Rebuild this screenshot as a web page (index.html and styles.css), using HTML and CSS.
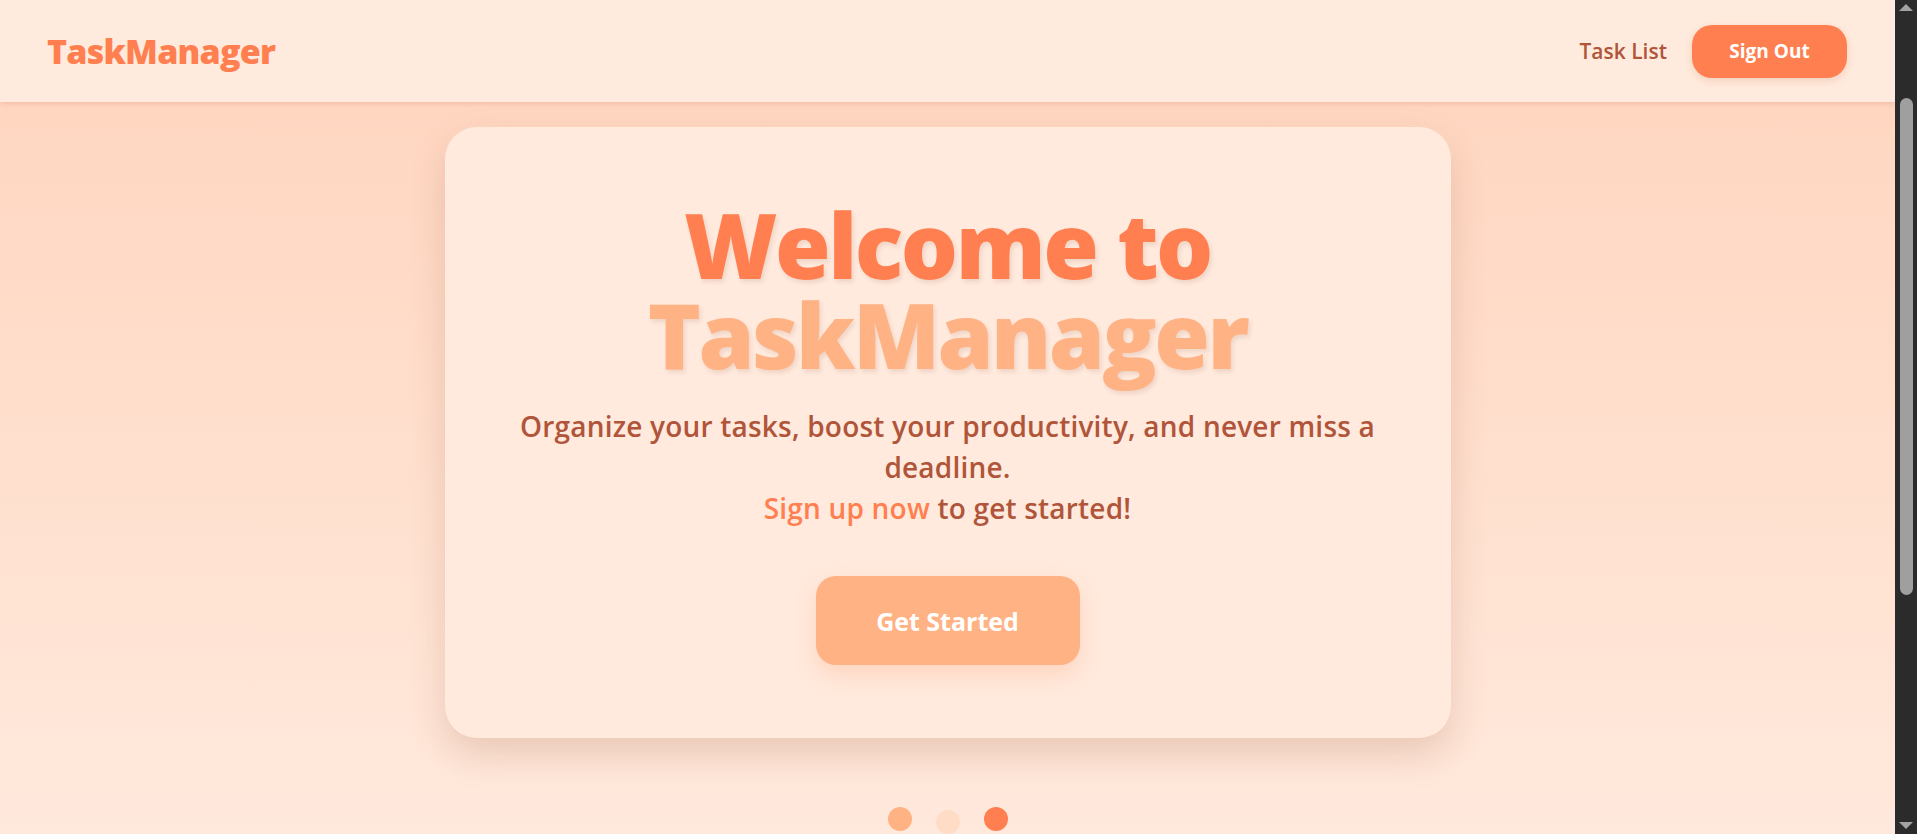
FILE: index.html
```html
<!DOCTYPE html>
<html lang="en">
<head>
<meta charset="utf-8">
<title>TaskManager</title>
<link rel="stylesheet" href="styles.css">
</head>
<body>
<header class="navbar">
  <a class="logo" href="#">TaskManager</a>
  <nav class="nav-links">
    <a class="nav-link" href="#">Task List</a>
    <button class="btn-signout">Sign Out</button>
  </nav>
</header>
<main class="hero">
  <section class="card">
    <h1 class="title"><span class="title-main">Welcome to</span><br><span class="title-accent">TaskManager</span></h1>
    <p class="subtitle">Organize your tasks, boost your productivity, and never miss a deadline.<br><a class="signup-link" href="#">Sign up now</a> to get started!</p>
    <button class="btn-start">Get Started</button>
  </section>
  <div class="dots">
    <span class="dot dot-peach"></span>
    <span class="dot dot-light"></span>
    <span class="dot dot-coral"></span>
  </div>
</main>
<div class="scrollbar" aria-hidden="true">
  <span class="sb-arrow sb-up"></span>
  <span class="sb-thumb"></span>
  <span class="sb-arrow sb-down"></span>
</div>
</body>
</html>
```
FILE: styles.css
```css
html {
  background: #ffe9dc;
}
body {
  margin: 0 22px 0 0;
  font-family: "Open Sans", "Noto Sans", sans-serif;
  background: linear-gradient(180deg, #ffd4bd 0px, #ffe9dc 834px) no-repeat;
  background-color: #ffe9dc;
  color: #b0553a;
}
a {
  text-decoration: none;
}
.navbar {
  height: 102px;
  box-sizing: border-box;
  display: flex;
  align-items: center;
  justify-content: space-between;
  padding: 0 48px 0 47px;
  background: #ffebdd;
  box-shadow: 0 2px 5px rgba(190, 110, 80, 0.22);
  position: relative;
  z-index: 2;
}
.logo {
  font-size: 34px;
  font-weight: 800;
  color: #ff7f50;
  letter-spacing: -0.8px;
}
.nav-links {
  display: flex;
  align-items: center;
  gap: 25px;
}
.nav-link {
  font-size: 21px;
  font-weight: 600;
  color: #b0553a;
}
.btn-signout {
  width: 155px;
  height: 53px;
  border: none;
  border-radius: 20px;
  background: #ff7f50;
  color: #fff;
  font-family: inherit;
  font-size: 19px;
  font-weight: 700;
  box-shadow: 0 3px 8px rgba(200, 100, 60, 0.2);
}
.hero {
  display: flex;
  flex-direction: column;
  align-items: center;
  padding: 25px 0 510px;
}
.card {
  width: 1006px;
  box-sizing: border-box;
  padding: 72px 48px 73px;
  background: #ffeadd;
  border-radius: 32px;
  box-shadow: 0 16px 36px rgba(150, 80, 50, 0.2);
  text-align: center;
  display: flex;
  flex-direction: column;
  align-items: center;
}
.title {
  margin: 0;
  font-size: 90px;
  line-height: 90px;
  font-weight: 800;
  letter-spacing: -2.5px;
  text-shadow: 2px 3px 4px rgba(120, 60, 30, 0.12);
}
.title-main {
  color: #ff7f50;
}
.title-accent {
  color: #ffb284;
}
.subtitle {
  margin: 27px 0 0;
  font-size: 28px;
  line-height: 41px;
  font-weight: 600;
  letter-spacing: 0.2px;
  color: #b0553a;
}
.signup-link {
  color: #ff7f50;
}
.btn-start {
  margin-top: 47px;
  width: 264px;
  height: 89px;
  border: none;
  border-radius: 20px;
  background: #ffb284;
  color: #fff;
  font-family: inherit;
  font-size: 25px;
  font-weight: 700;
  box-shadow: 0 10px 22px rgba(255, 140, 90, 0.22);
}
.dots {
  margin-top: 69px;
  display: flex;
  gap: 24px;
  align-items: flex-start;
}
.dot {
  width: 24px;
  height: 24px;
  border-radius: 50%;
}
.dot-peach {
  background: #ffb284;
}
.dot-light {
  background: #ffdcc5;
  margin-top: 3px;
}
.dot-coral {
  background: #ff7f50;
}
.scrollbar {
  position: fixed;
  top: 0;
  right: 0;
  width: 22px;
  height: 100vh;
  background: #2b2b2b;
  display: flex;
  flex-direction: column;
  align-items: center;
  z-index: 10;
}
.sb-arrow {
  width: 0;
  height: 0;
  border-left: 7px solid transparent;
  border-right: 7px solid transparent;
}
.sb-up {
  margin-top: 4px;
  border-bottom: 7px solid #a3a3a3;
}
.sb-thumb {
  margin-top: 87px;
  width: 13px;
  height: 497px;
  border-radius: 7px;
  background: #9f9f9f;
}
.sb-down {
  margin-top: auto;
  margin-bottom: 5px;
  border-top: 7px solid #a3a3a3;
}
```
